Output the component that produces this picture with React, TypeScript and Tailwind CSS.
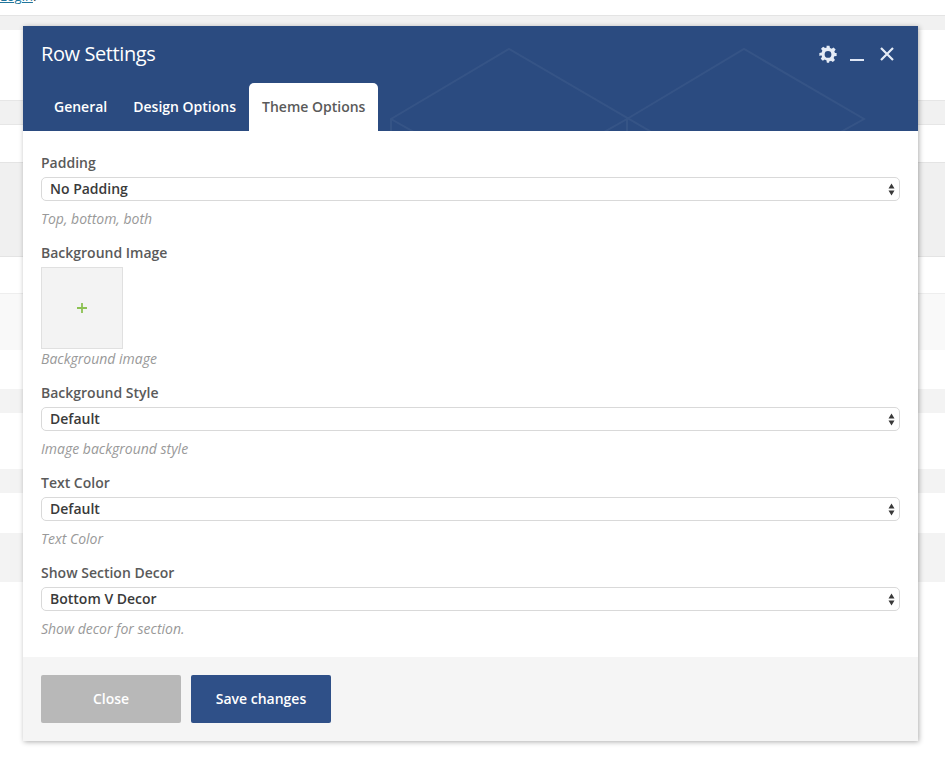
import React from "react";

const rows: [number, string][] = [
  [15, "bg-white"],
  [15, "bg-[#f1f1f1] border-t border-[#e4e4e4]"],
  [70, "bg-white"],
  [25, "bg-[#f1f1f1] border-t border-b border-[#e6e6e6]"],
  [37, "bg-white"],
  [95, "bg-[#f0f0f0] border-t border-b border-[#e4e4e4]"],
  [36, "bg-white"],
  [57, "bg-[#f9f9f9] border-t border-[#eeeeee]"],
  [39, "bg-white"],
  [24, "bg-[#f3f3f3]"],
  [56, "bg-white"],
  [24, "bg-[#f3f3f3]"],
  [40, "bg-white"],
  [49, "bg-[#f3f3f3]"],
];

function Label({ children }: { children: React.ReactNode }) {
  return <div className="text-[14px] leading-[20px] font-semibold text-[#5a5a5a]">{children}</div>;
}
function Hint({ children }: { children: React.ReactNode }) {
  return <div className="mt-[8px] text-[14px] leading-[20px] italic text-[#999999]">{children}</div>;
}
function Select({ value }: { value: string }) {
  return (
    <div className="relative mt-[4px] h-[24px]">
      <select
        defaultValue={value}
        className="block h-[24px] w-full appearance-none rounded-[5px] border border-[#d9d9d9] bg-white pb-[2px] pl-[8px] text-[14px] font-semibold text-[#3a3a3a] outline-none"
      >
        <option>{value}</option>
      </select>
      <svg className="pointer-events-none absolute right-[5px] top-[6px]" width="7" height="13" viewBox="0 0 7 13">
        <path d="M3.5 0.5 L6.5 5.500 H0.5 Z M0.5 7.500 H6.5 L3.5 12.500 Z" fill="#3a3a3a" />
      </svg>
    </div>
  );
}

export default function App() {
  return (
    <div className="relative h-[775px] w-[945px] overflow-hidden bg-white font-['Open_Sans',sans-serif]">
      <div className="absolute left-0 top-[-13px] text-[13px] leading-[18px] text-[#21759b]">
        <span className="underline">Login</span>
        <span className="text-[#444444]">.</span>
      </div>
      <div className="flex flex-col">
        {rows.map(([h, c], i) => (
          <div key={i} className={c} style={{ height: h }} />
        ))}
      </div>

      <div className="absolute left-[23px] top-[26px] flex h-[715px] w-[895px] flex-col bg-white shadow-[1px_1px_5px_rgba(0,0,0,0.32)]">
        <div className="relative h-[105px] overflow-hidden bg-[#2b4b80]">
          <svg className="absolute left-0 top-0" width="895" height="105" viewBox="0 0 895 105" fill="none">
            <path
              d="M368 116 L368 93 L486 23 L721 160 M368 93 L486 160 M604 93 L604 116 M486 160 L604 93 L721 23 L841 93 L721 160"
              stroke="#ffffff"
              strokeOpacity="0.05"
              strokeWidth="2"
            />
          </svg>
          <div className="relative flex h-[56px] items-center justify-between pl-[18px] pr-[23px]">
            <div className="text-[20px] leading-[28px] tracking-[-0.4px] text-white">Row Settings</div>
            <div className="flex items-center">
              <svg width="18" height="18" viewBox="0 0 24 24" className="mr-[13px]">
                <path
                  fill="#e6ecf6"
                  fillRule="evenodd"
                  d="M10 1h4l.6 3.1c.8.2 1.500.5 2.200.9l2.600-1.800 2.800 2.800-1.800 2.600c.4.700.7 1.400.9 2.200L23.500 10.500v4l-3.100.6c-.2.8-.5 1.500-.9 2.200l1.800 2.600-2.800 2.800-2.600-1.800c-.7.4-1.400.7-2.200.9L13.500 23.500h-3l-.6-3.300c-.8-.2-1.500-.5-2.200-.9l-2.600 1.800-2.800-2.800 1.800-2.600c-.4-.7-.7-1.400-.9-2.200L.5 14.500v-4l3.100-.6c.2-.8.5-1.500.9-2.200L2.700 5.100l2.800-2.800 2.600 1.800c.7-.4 1.400-.7 2.200-.9zM12 8a4.500 4.500 0 1 0 0 9 4.500 4.500 0 0 0 0-9z"
                />
              </svg>
              <div className="mr-[15px] mt-[12px] h-[2px] w-[14px] bg-[#dfe7f5]" />
              <svg width="16" height="16" viewBox="0 0 16 16">
                <path d="M2 2 L14 14 M14 2 L2 14" stroke="#e6ecf6" strokeWidth="2.200" />
              </svg>
            </div>
          </div>
          <div className="absolute bottom-0 left-[18px] flex h-[48px] text-[14px] font-semibold">
            <div className="flex items-center px-[13px] pb-[2px] text-white">General</div>
            <div className="flex items-center px-[13px] pb-[2px] text-white">Design Options</div>
            <div className="flex items-center rounded-t-[5px] bg-white px-[13px] pb-[2px] text-[#5a5a5a]">Theme Options</div>
          </div>
        </div>

        <div className="flex-1 px-[18px] pt-[22px]">
          <Label>Padding</Label>
          <Select value="No Padding" />
          <Hint>Top, bottom, both</Hint>

          <div className="mt-[14px]">
            <Label>Background Image</Label>
          </div>
          <div className="mt-[4px] flex h-[82px] w-[82px] items-center justify-center border border-[#e0e0e0] bg-[#f3f3f3]">
            <svg width="10" height="10" viewBox="0 0 10 10">
              <path d="M5 0 V10 M0 5 H10" stroke="#8cc152" strokeWidth="1.800" />
            </svg>
          </div>
          <div className="text-[14px] leading-[20px] italic text-[#999999]">Background image</div>

          <div className="mt-[14px]">
            <Label>Background Style</Label>
          </div>
          <Select value="Default" />
          <Hint>Image background style</Hint>

          <div className="mt-[14px]">
            <Label>Text Color</Label>
          </div>
          <Select value="Default" />
          <Hint>Text Color</Hint>

          <div className="mt-[14px]">
            <Label>Show Section Decor</Label>
          </div>
          <Select value="Bottom V Decor" />
          <Hint>Show decor for section.</Hint>
        </div>

        <div className="flex h-[84px] items-start gap-[10px] bg-[#f5f5f5] px-[18px] pt-[18px]">
          <button className="h-[48px] w-[140px] rounded-[2px] bg-[#b8b8b8] pb-[2px] text-[14px] font-semibold text-white">Close</button>
          <button className="h-[48px] w-[140px] rounded-[2px] bg-[#2f5088] pb-[2px] text-[14px] font-semibold text-white">Save changes</button>
        </div>
      </div>
    </div>
  );
}
